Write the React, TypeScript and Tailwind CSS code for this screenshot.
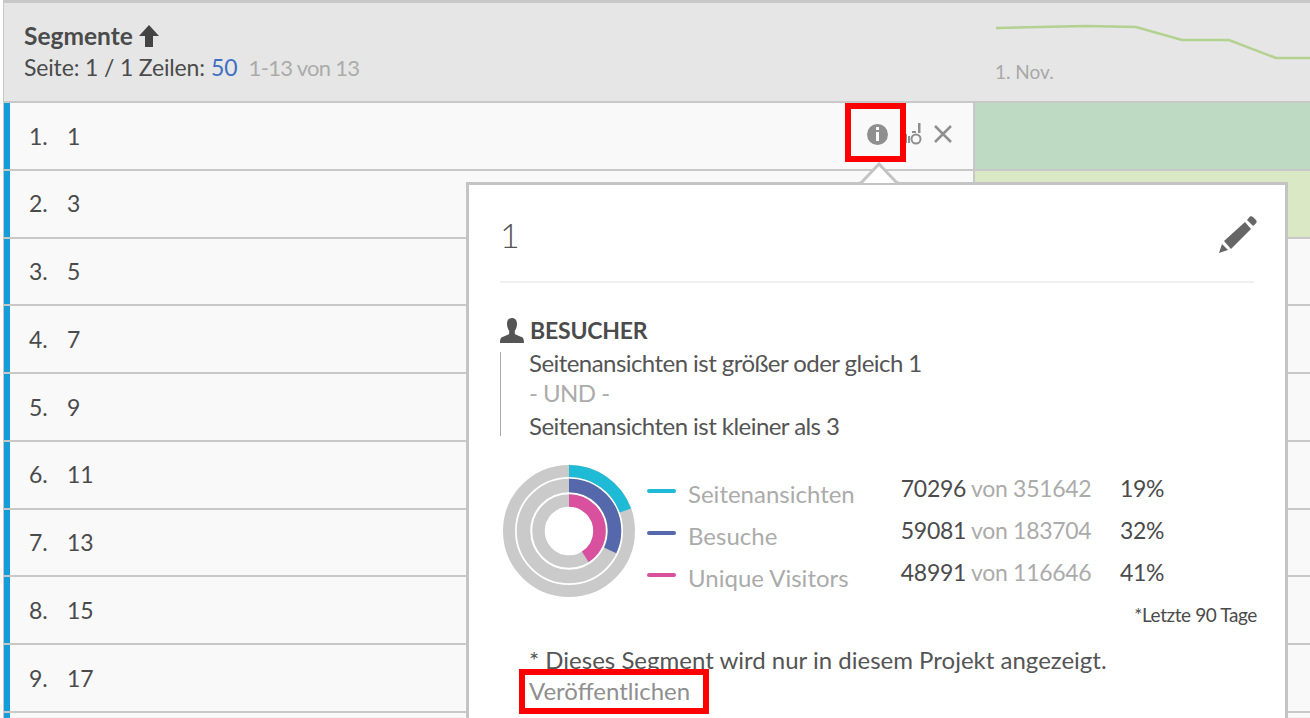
import React from 'react';

const rows = ['1', '3', '5', '7', '9', '11', '13', '15', '17'];

const stats = [
    { label: 'Seitenansichten', color: 'bg-[#1fbad6]', value: '70296', total: '351642', pct: '19%' },
    { label: 'Besuche', color: 'bg-[#5468ab]', value: '59081', total: '183704', pct: '32%' },
    { label: 'Unique Visitors', color: 'bg-[#d9509f]', value: '48991', total: '116646', pct: '41%' },
];

const Ring = ({ r, width, color, pct }: { r: number; width: number; color: string; pct: number }) => {
    const length = 2 * Math.PI * r;
    return (
        <>
            <circle cx="66" cy="66" r={r} fill="none" stroke="#cacaca" strokeWidth={width} />
            <circle
                cx="66"
                cy="66"
                r={r}
                fill="none"
                stroke={color}
                strokeWidth={width}
                strokeDasharray={`${length * pct} ${length}`}
                transform="rotate(-90 66 66)"
            />
        </>
    );
};

const Donut = () => (
    <svg width="132" height="132" viewBox="0 0 132 132" className="ml-[3px] shrink-0">
        <Ring r={60} width={12} color="#1fbad6" pct={0.194} />
        <Ring r={45.5} width={13.5} color="#5468ab" pct={0.32} />
        <Ring r={30.5} width={12.5} color="#d9509f" pct={0.41} />
    </svg>
);

const PersonIcon = () => (
    <svg width="24" height="25" viewBox="0 0 24 25" className="shrink-0">
        <path
            d="M12 0c3.2 0 5 2.4 5 5.8 0 2.8-.9 5.4-2.2 7v2.6c0 1.2 4.6 2.4 7 3.6 1 .6 2.2 1.4 2.2 6H0c0-4.6 1.2-5.4 2.2-6 2.4-1.2 7-2.4 7-3.6v-2.6C7.9 11.2 7 8.6 7 5.8 7 2.4 8.8 0 12 0z"
            fill="#555"
        />
    </svg>
);

const PencilIcon = () => (
    <svg width="38" height="37" viewBox="0 0 38 37" className="shrink-0 -mr-[3px]">
        <path d="M0 37l3-9 6 6z" fill="#666" />
        <path d="M5 25L26 6l6 7-20 20z" fill="#666" />
        <path d="M28 4l3-3.4c1-.6 2-.4 3 .4l3 3c.8 1 .8 2 .2 3l-3 3z" fill="#666" />
    </svg>
);

const RowIcons = () => (
    <div className="ml-auto flex items-center mr-[20px] -mt-[3px]">
        <div className="w-[21px] h-[21px] rounded-full bg-[#8f8f8f] flex flex-col items-center justify-center gap-[2px]">
            <div className="w-[3px] h-[3px] bg-[#f9f9f9]" />
            <div className="w-[3px] h-[9px] bg-[#f9f9f9]" />
        </div>
        <svg width="22" height="24" viewBox="0 0 22 24" className="ml-[12px]">
            <rect x="0" y="14" width="2" height="7" fill="#8f8f8f" />
            <rect x="4" y="12" width="3" height="9" fill="#8f8f8f" />
            <rect x="8" y="14" width="2" height="7" fill="#8f8f8f" />
            <rect x="18" y="1" width="2.5" height="10" fill="#8f8f8f" />
            <rect x="12" y="9" width="4" height="2" fill="#8f8f8f" />
            <circle cx="16" cy="17" r="4.5" fill="none" stroke="#8f8f8f" strokeWidth="2" />
        </svg>
        <svg width="20" height="20" viewBox="0 0 20 20" className="ml-[11px]">
            <path d="M2 2l16 16M18 2L2 18" stroke="#8f8f8f" strokeWidth="2.5" fill="none" />
        </svg>
    </div>
);

const App: React.FC = () => {
    return (
        <div className="relative w-[1310px] h-[718px] overflow-hidden bg-white pl-[3px] font-['Lato',sans-serif] text-[#4b4b4b] text-[23px]">
            {/* Table */}
            <div className="border-l-[1.5px] border-t-[3px] border-[#c8c8c8]">
                <div className="flex h-[100px] bg-[#e6e6e6] border-b-2 border-[#c8c8c8]">
                    <div className="w-[971px] pl-[20px] pt-[19px]">
                        <div className="flex items-center h-[28px]">
                            <span className="font-bold text-[24.5px]">Segmente</span>
                            <svg width="20" height="22" viewBox="0 0 20 22" className="ml-[6px]">
                                <path d="M10 0l10 11h-6v11H6V11H0z" fill="#444" />
                            </svg>
                        </div>
                        <div className="flex items-center h-[30px] mt-[2px] text-[23px]">
                            <span className="tracking-[-0.15px]">Seite: 1 / 1 Zeilen:</span>
                            <span className="ml-[6px] text-[#3f6fc4]">50</span>
                            <span className="ml-[11px] text-[22px] tracking-[-0.7px] text-[#ababab]">1-13 von 13</span>
                        </div>
                    </div>
                    <div className="flex-1 flex flex-col">
                        <svg width="336" height="59" viewBox="0 0 336 59" className="shrink-0">
                            <polyline
                                points="22,25 112,23 162,24 208,37 255,37 302,55 336,55"
                                fill="none"
                                stroke="#b3d190"
                                strokeWidth="2.5"
                            />
                        </svg>
                        <span className="pl-[21px] text-[19px] leading-[20px] text-[#a8a8a8]">1. Nov.</span>
                    </div>
                </div>
                {rows.map((value, index) => (
                    <div key={value} className="flex h-[67.75px] border-b-2 border-[#c8c8c8]">
                        <div className="w-[971px] flex items-center bg-[#f9f9f9] border-l-[6px] border-[#169cd8] border-r-2 border-r-[#c8c8c8]">
                            <span className="w-[38px] ml-[19px]">{index + 1}.</span>
                            <span>{value}</span>
                            {index === 0 && <RowIcons />}
                        </div>
                        <div
                            className={
                                index === 0
                                    ? 'flex-1 bg-[#bfdac3]'
                                    : index === 1
                                      ? 'flex-1 bg-[#dbe8c6]'
                                      : 'flex-1 bg-[#f9f9f9]'
                            }
                        />
                    </div>
                ))}
                <div className="flex h-[10px]">
                    <div className="w-[971px] bg-[#f9f9f9] border-l-[6px] border-[#169cd8] border-r-2 border-r-[#c8c8c8]" />
                    <div className="flex-1 bg-[#f9f9f9]" />
                </div>
            </div>

            {/* Info popover */}
            <div className="absolute left-[466px] top-[182px] w-[822px] h-[600px] bg-white border-[3px] border-[#c4c4c4] px-[31px]">
                <svg width="40" height="22" viewBox="0 0 40 22" className="absolute left-[390px] -top-[23px]">
                    <path d="M0 21h2L20 2l18 19h2" fill="white" stroke="#c4c4c4" strokeWidth="3" />
                </svg>
                <div className="flex items-center justify-between h-[98px] pt-[3px] border-b-2 border-[#f0f0f0]">
                    <span className="text-[34px] font-light text-[#555]">1</span>
                    <PencilIcon />
                </div>
                <div className="flex items-center gap-[6px] mt-[34px] h-[26px]">
                    <PersonIcon />
                    <span className="font-bold text-[23px] tracking-[-0.2px]">BESUCHER</span>
                </div>
                <div className="mt-[9px] h-[84px] border-l border-[#aaaaaa] pl-[28px] text-[24px] tracking-[-0.55px] leading-[20px] text-[#555]">
                    <div className="pt-[1px]">Seitenansichten ist größer oder gleich 1</div>
                    <div className="mt-[10px] text-[#ababab]">- UND -</div>
                    <div className="mt-[13px]">Seitenansichten ist kleiner als 3</div>
                </div>
                <div className="flex mt-[29px] h-[132px]">
                    <Donut />
                    <div className="ml-[12px] w-[239px] pt-[5px]">
                        {stats.map(stat => (
                            <div key={stat.label} className="flex items-center h-[42px]">
                                <div className={`w-[29px] h-[4px] rounded-full ${stat.color}`} />
                                <span className="ml-[12px] mt-[6px] text-[24px] text-[#ababab]">{stat.label}</span>
                            </div>
                        ))}
                    </div>
                    <div className="pt-[2px]">
                        {stats.map(stat => (
                            <div key={stat.value} className="flex items-center h-[42px] tracking-[-0.3px]">
                                <span className="w-[80px] text-right">{stat.value}</span>
                                <span className="w-[154px] pl-[5px] text-[#ababab]">von {stat.total}</span>
                                <span>{stat.pct}</span>
                            </div>
                        ))}
                    </div>
                </div>
                <div className="mt-[8px] h-[20px] leading-[20px] text-right text-[19px] -mr-[3px] tracking-[-0.4px]">*Letzte 90 Tage</div>
                <div className="mt-[25px] pl-[29px] text-[24px] leading-[20px] text-[#555]">* Dieses Segment wird nur in diesem Projekt angezeigt.</div>
                <div className="mt-[11px] pl-[29px] text-[24px] leading-[20px] text-[#8f8f8f]">Veröffentlichen</div>
            </div>

            {/* Red annotation boxes */}
            <div className="absolute left-[845px] top-[103px] w-[61px] h-[59px] border-[6px] border-[#ff0000]" />
            <div className="absolute left-[519px] top-[669px] w-[190px] h-[45px] border-[6px] border-[#ff0000]" />
        </div>
    );
};

export default App;
